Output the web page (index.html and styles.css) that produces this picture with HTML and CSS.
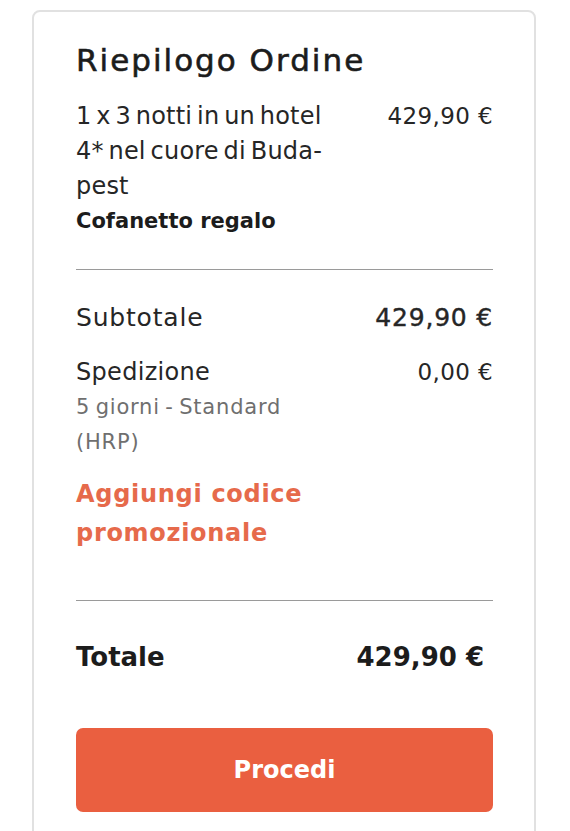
FILE: index.html
```html
<!DOCTYPE html>
<html lang="it">
<head>
<meta charset="utf-8">
<title>Riepilogo Ordine</title>
<link rel="stylesheet" href="styles.css">
</head>
<body>
<section class="card">
  <h1 class="title">Riepilogo Ordine</h1>
  <div class="row item">
    <div class="desc">
      <div>1 x 3 notti in un hotel 4* nel cuore di Buda&shy;pest</div>
      <div class="gift">Cofanetto regalo</div>
    </div>
    <div class="price">429,90 €</div>
  </div>
  <hr class="divider divider-first">
  <div class="row subtotal">
    <div class="label">Subtotale</div>
    <div class="price">429,90 €</div>
  </div>
  <div class="row shipping">
    <div class="desc">
      <div>Spedizione</div>
      <div class="muted">5 giorni - Standard (HRP)</div>
    </div>
    <div class="price">0,00 €</div>
  </div>
  <a class="promo" href="#">Aggiungi codice promozionale</a>
  <hr class="divider divider-second">
  <div class="row total">
    <div class="label">Totale</div>
    <div class="price">429,90 €</div>
  </div>
  <button class="proceed" type="button">Procedi</button>
</section>
</body>
</html>
```

FILE: styles.css
```css
html, body {
  margin: 0;
  padding: 0;
  background: #ffffff;
}

body {
  font-family: "DejaVu Sans", "Liberation Sans", sans-serif;
  color: #262626;
}

.card {
  box-sizing: border-box;
  width: 504px;
  min-height: 860px;
  margin: 10px 0 0 32px;
  padding: 28px 41px 40px 42px;
  border: 2px solid #e1e1e1;
  border-radius: 8px;
}

.title {
  margin: 0;
  font-size: 31px;
  line-height: 40px;
  font-weight: 400;
  letter-spacing: 2px;
  -webkit-text-stroke: 0.6px #1c1c1c;
  color: #1c1c1c;
}

.row {
  display: flex;
  justify-content: space-between;
  align-items: flex-start;
}

.desc {
  width: 272px;
}

.price {
  word-spacing: 0;
}

.item {
  margin-top: 19px;
  font-size: 24px;
  line-height: 35px;
  letter-spacing: 0.2px;
  word-spacing: -3px;
  hyphens: manual;
}

.item .price {
  font-size: 23px;
  letter-spacing: 0.4px;
}

.gift {
  font-size: 21px;
  font-weight: 700;
  letter-spacing: 0;
  word-spacing: 0;
  color: #1c1c1c;
}

.divider {
  margin: 0;
  border: 0;
  border-top: 1px solid #9a9a9a;
  height: 0;
}

.divider-first {
  margin-top: 30px;
}

.subtotal {
  margin-top: 30px;
  font-size: 25px;
  line-height: 35px;
  letter-spacing: 0.8px;
}

.subtotal .price {
  -webkit-text-stroke: 0.4px #262626;
}

.shipping {
  margin-top: 20px;
  font-size: 24px;
  line-height: 35px;
  letter-spacing: 0.3px;
  word-spacing: -3px;
}

.shipping .price {
  font-size: 23px;
  letter-spacing: 0.4px;
}

.muted {
  font-size: 21px;
  letter-spacing: 0.8px;
  word-spacing: -2px;
  color: #6f6f6f;
}

.promo {
  display: block;
  width: 300px;
  margin-top: 15px;
  font-size: 24px;
  line-height: 39px;
  font-weight: 700;
  letter-spacing: 0.7px;
  color: #e66a4b;
  text-decoration: none;
}

.divider-second {
  margin-top: 47px;
}

.total {
  margin-top: 36px;
  font-size: 26px;
  line-height: 40px;
  font-weight: 700;
  color: #1c1c1c;
}

.total .price {
  padding-right: 9px;
}

.proceed {
  display: block;
  width: 100%;
  height: 84px;
  margin-top: 51px;
  padding: 0;
  border: 0;
  border-radius: 7px;
  background: #ea5f40;
  color: #ffffff;
  font-family: "DejaVu Sans", "Liberation Sans", sans-serif;
  font-size: 24px;
  font-weight: 700;
  cursor: pointer;
}
```
